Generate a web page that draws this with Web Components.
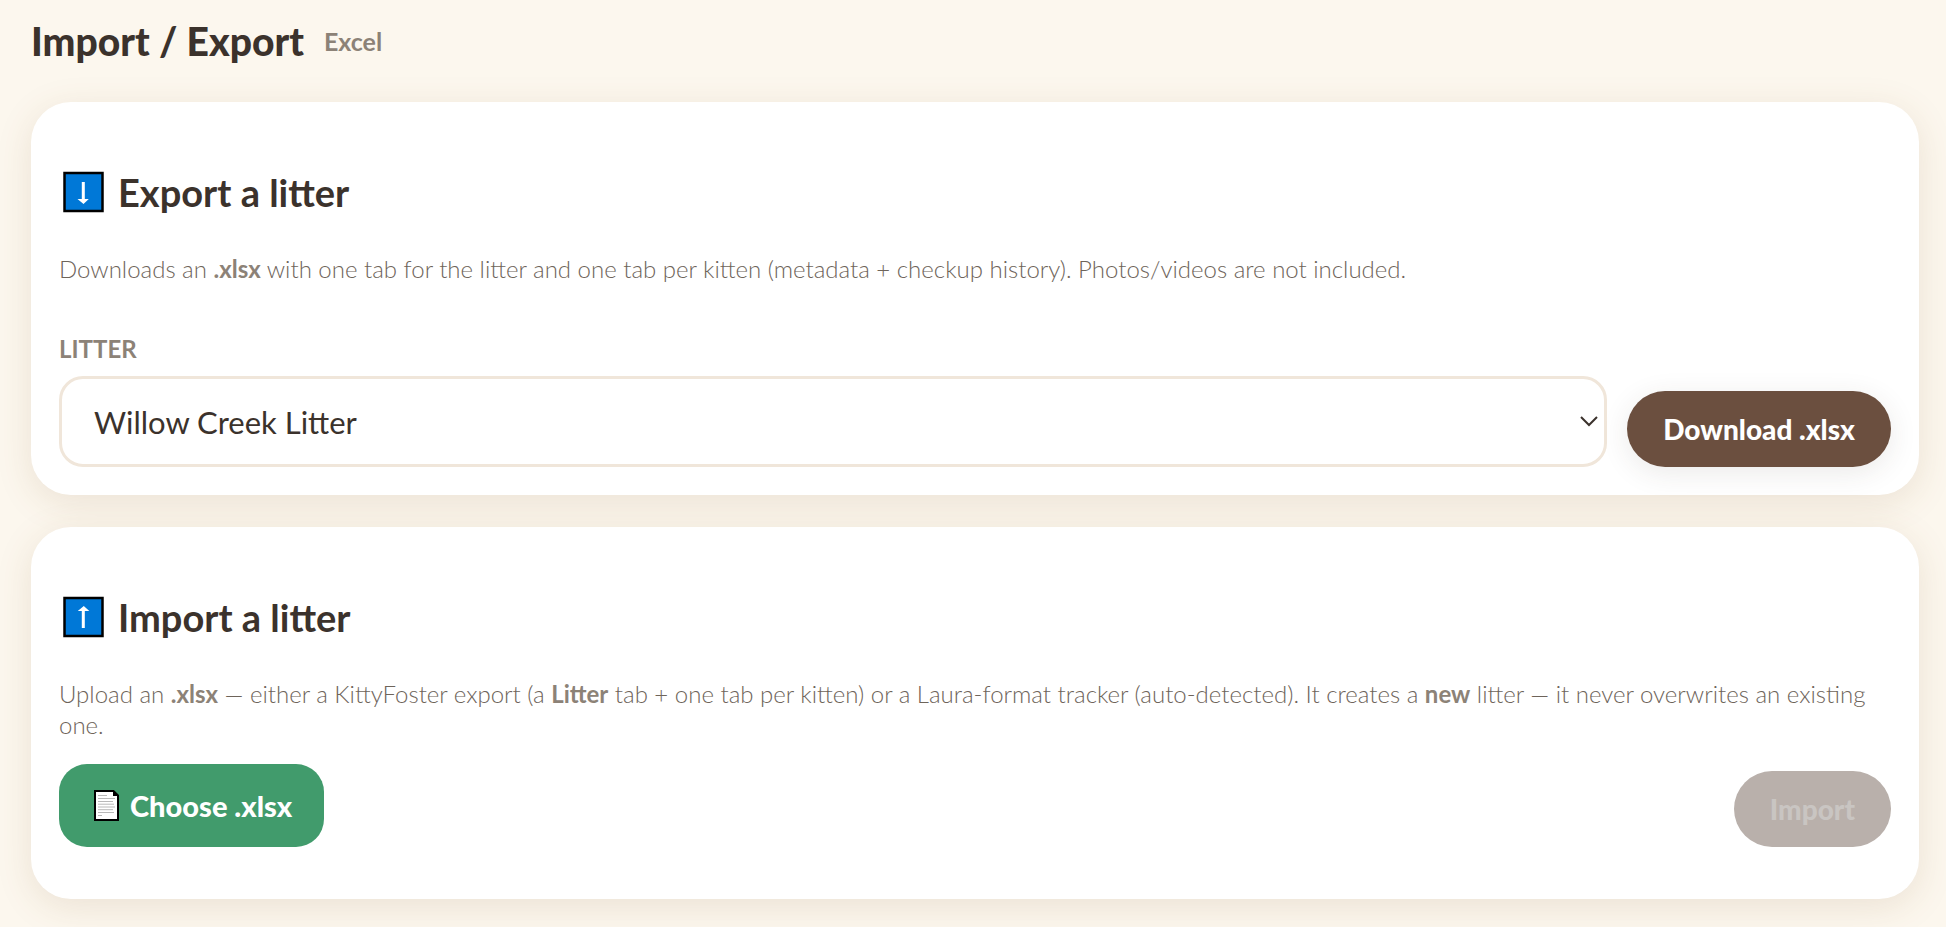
<!DOCTYPE html>
<html lang="en">
<head>
<meta charset="utf-8">
<meta name="viewport" content="width=device-width, initial-scale=1">
<title>Import / Export</title>
<style>
  body {
    margin: 0;
    min-height: 100vh;
    background: #fcf7ee;
    color: #3b322c;
    font-family: Lato, "Open Sans", sans-serif;
    --muted: #8c8277;
    --muted-light: #6e645a;
    --brown: #6b4f3f;
    --green: #419b6c;
    --line: #f0e6da;
  }
  b {
    color: var(--muted);
    font-weight: 700;
  }
</style>
</head>
<body>
<import-export-page>
  <page-header slot="header" subtitle="Excel">Import / Export</page-header>

  <litter-card heading="Export a litter" icon="down">
    <span slot="text">Downloads an <b>.xlsx</b> with one tab for the litter and one tab per kitten (metadata + checkup history). Photos/videos are not included.</span>
    <litter-select label="Litter" options="Willow Creek Litter"></litter-select>
    <pill-button>Download .xlsx</pill-button>
  </litter-card>

  <litter-card heading="Import a litter" icon="up">
    <span slot="text">Upload an <b>.xlsx</b> — either a KittyFoster export (a <b>Litter</b> tab + one tab per kitten) or a Laura-format tracker (auto-detected). It creates a <b>new</b> litter — it never overwrites an existing one.</span>
    <file-button>Choose .xlsx</file-button>
    <pill-button disabled>Import</pill-button>
  </litter-card>
</import-export-page>

<script>
class ImportExportPage extends HTMLElement {
    static styles = `
  <style>
  :host {
    display: block;
    padding: 0 27px 28px 31px;
  }
  main {
    display: flex;
    flex-direction: column;
    gap: 32px;
  }
  </style>
  `;

    connectedCallback() {
      this.attachShadow({ mode: "open" });
      this.shadowRoot.innerHTML = `
      ${ImportExportPage.styles}
      <slot name="header"></slot>
      <main><slot></slot></main>
      `;
    }
}

class PageHeader extends HTMLElement {
    static styles = `
  <style>
  :host {
    display: block;
  }
  header {
    display: flex;
    align-items: center;
    gap: 20px;
    height: 82px;
    padding-bottom: 20px;
  }
  h1 {
    margin: 0;
    font-size: 39px;
    font-weight: 900;
    line-height: 48px;
  }
  span {
    color: var(--muted);
    font-size: 25px;
    font-weight: 700;
    line-height: 32px;
  }
  </style>
  `;

    connectedCallback() {
      this.attachShadow({ mode: "open" });
      this.shadowRoot.innerHTML = `
      ${PageHeader.styles}
      <header>
        <h1><slot></slot></h1>
        <span>${this.getAttribute("subtitle")}</span>
      </header>
      `;
    }
}

class LitterCard extends HTMLElement {
    static styles = `
  <style>
  :host {
    display: block;
    background: #fff;
    border-radius: 40px;
    padding: 28px;
    box-shadow: 0 8px 36px rgba(120, 85, 40, 0.13);
  }
  :host([icon="up"]) {
    padding-bottom: 52px;
  }
  h2 {
    display: flex;
    align-items: center;
    gap: 11px;
    margin: 38px 0 37px;
    font-size: 38px;
    font-weight: 700;
    line-height: 48px;
  }
  svg {
    width: 48px;
    height: 48px;
    flex: none;
  }
  p {
    margin: 0 0 24px;
    color: var(--muted-light);
    font-size: 24px;
    font-weight: 300;
    line-height: 31px;
  }
  .row {
    display: flex;
    align-items: flex-end;
    justify-content: space-between;
    gap: 20px;
  }
  :host([icon="down"]) .row {
    margin-top: 50px;
  }
  </style>
  `;

    static arrows = {
      down: "M22.800 14h3v17h4L24.500 36l-6-5h4.300z",
      up: "M22.800 35V18h-4l6-5 5.500 5h-4.500v17z"
    };

    connectedCallback() {
      this.attachShadow({ mode: "open" });
      this.shadowRoot.innerHTML = `
      ${LitterCard.styles}
      <h2>
        <svg viewBox="0 0 48 48" aria-hidden="true">
          <rect x="5.500" y="5" width="38" height="38" fill="#0078d7" stroke="#000" stroke-width="2.500"/>
          <path d="${LitterCard.arrows[this.getAttribute("icon")]}" fill="#fff"/>
        </svg>
        ${this.getAttribute("heading")}
      </h2>
      <p><slot name="text"></slot></p>
      <div class="row"><slot></slot></div>
      `;
    }
}

class LitterSelect extends HTMLElement {
    static styles = `
  <style>
  :host {
    display: block;
    flex: 1;
  }
  label {
    display: block;
    margin-bottom: 12px;
    color: var(--muted);
    font-size: 24px;
    font-weight: 700;
    line-height: 30px;
    text-transform: uppercase;
  }
  .field {
    display: grid;
    align-items: center;
  }
  select, svg {
    grid-area: 1 / 1;
  }
  select {
    appearance: none;
    width: 100%;
    height: 91px;
    margin: 0;
    padding: 0 32px;
    border: 3px solid var(--line);
    border-radius: 24px;
    background: #fff;
    color: inherit;
    font-family: inherit;
    font-size: 31px;
    font-weight: 400;
  }
  svg {
    justify-self: end;
    width: 18px;
    height: 12px;
    margin-right: 9px;
    pointer-events: none;
  }
  </style>
  `;

    connectedCallback() {
      const options = this.getAttribute("options").split(",");
      this.attachShadow({ mode: "open" });
      this.shadowRoot.innerHTML = `
      ${LitterSelect.styles}
      <label for="litter">${this.getAttribute("label")}</label>
      <div class="field">
        <select id="litter">${options.map(o => `<option>${o}</option>`).join("")}</select>
        <svg viewBox="0 0 18 12" fill="none" stroke="#3b322c" stroke-width="2" aria-hidden="true">
          <path d="M1 1l8 8 8-8"/>
        </svg>
      </div>
      `;
    }
}

class PillButton extends HTMLElement {
    static styles = `
  <style>
  :host {
    display: block;
    flex: none;
  }
  button {
    display: block;
    height: 76px;
    padding: 0 36px;
    border: 0;
    border-radius: 38px;
    background: var(--brown);
    color: #fff;
    font-family: inherit;
    font-size: 28px;
    font-weight: 900;
    box-shadow: 0 6px 28px rgba(59, 50, 44, 0.1);
    cursor: pointer;
  }
  button:disabled {
    background: #b9b0ab;
    color: #c9c5c2;
    box-shadow: none;
    cursor: default;
  }
  </style>
  `;

    connectedCallback() {
      this.attachShadow({ mode: "open" });
      this.shadowRoot.innerHTML = `
      ${PillButton.styles}
      <button type="button" ${this.hasAttribute("disabled") ? "disabled" : ""}><slot></slot></button>
      `;
    }
}

class FileButton extends HTMLElement {
    static styles = `
  <style>
  :host {
    display: block;
    flex: none;
  }
  button {
    display: flex;
    align-items: center;
    gap: 11px;
    height: 83px;
    padding: 0 32px 0 35px;
    border: 0;
    border-radius: 28px;
    background: var(--green);
    color: #fff;
    font-family: inherit;
    font-size: 29px;
    font-weight: 900;
    cursor: pointer;
  }
  svg {
    width: 25px;
    height: 31px;
  }
  </style>
  `;

    connectedCallback() {
      this.attachShadow({ mode: "open" });
      this.shadowRoot.innerHTML = `
      ${FileButton.styles}
      <button type="button">
        <svg viewBox="0 0 25 31" aria-hidden="true">
          <path d="M1 1h18.500l4.500 4.500V30H1z" fill="#fff" stroke="#000" stroke-width="2"/>
          <path d="M19 1v5h5z" fill="#000"/>
          <path d="M4 5.500h9M4 8.500h17M4 11.500h15M4 14.200h16M4 17h17M4 19.700h15M4 22.500h16M4 25.500h4" stroke="#b8b8b8"/>
        </svg>
        <slot></slot>
      </button>
      `;
    }
}

customElements.define("import-export-page", ImportExportPage);
customElements.define("page-header", PageHeader);
customElements.define("litter-card", LitterCard);
customElements.define("litter-select", LitterSelect);
customElements.define("pill-button", PillButton);
customElements.define("file-button", FileButton);
</script>
</body>
</html>
